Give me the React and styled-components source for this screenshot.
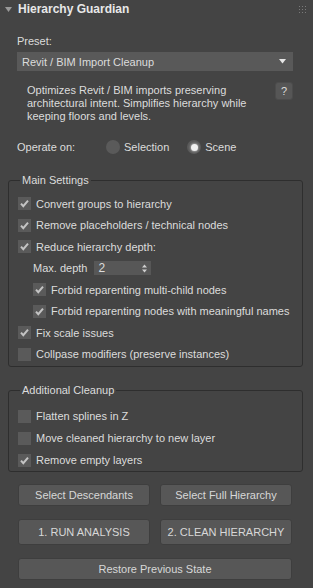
import styled, { createGlobalStyle } from "styled-components";

const GlobalStyle = createGlobalStyle`
  html, body {
    margin: 0;
    padding: 0;
    background: #444444;
  }
  body {
    font-family: "Liberation Sans", Arial, sans-serif;
    font-size: 11px;
    color: #dcdcdc;
  }
`;

const Panel = styled.div`
  width: 313px;
  height: 588px;
  background: #444444;
  overflow: hidden;
  white-space: nowrap;
`;

const Header = styled.div`
  height: 18px;
  display: flex;
  align-items: center;
  padding: 0 7px 0 5px;
`;

const Title = styled.div`
  flex: 1;
  margin-left: 6px;
  font-weight: bold;
  font-size: 12px;
  color: #e8e8e8;
`;

const Grip = styled.div`
  display: grid;
  grid-template-columns: repeat(3, 1px);
  gap: 2px;
  span {
    width: 1px;
    height: 1px;
    background: #7a7a7a;
  }
`;

const Body = styled.div`
  padding: 0 10px 0 17px;
`;

const Label = styled.div`
  line-height: 14px;
  margin-top: ${(p) => p.$top || 0}px;
`;

const Dropdown = styled.div`
  margin-top: 4px;
  height: 19px;
  width: 276px;
  box-sizing: border-box;
  background: #595959;
  display: flex;
  align-items: center;
  justify-content: space-between;
  padding: 0 7px 0 5px;
`;

const InfoRow = styled.div`
  display: flex;
  align-items: flex-start;
  justify-content: space-between;
  width: 276px;
  margin-top: 11px;
`;

const Description = styled.div`
  padding-left: 10px;
  padding-top: 2px;
  line-height: 13px;
`;

const HelpButton = styled.div`
  width: 18px;
  height: 18px;
  box-sizing: border-box;
  border-radius: 3px;
  background: #565656;
  border: 1px solid #4c4c4c;
  display: flex;
  align-items: center;
  justify-content: center;
`;

const OperateRow = styled.div`
  display: flex;
  align-items: center;
  height: 20px;
  margin-top: 14px;
`;

const OperateLabel = styled.div`
  width: 89px;
`;

const RadioItem = styled.div`
  display: flex;
  align-items: center;
  gap: 4px;
  margin-right: ${(p) => p.$gap || 0}px;
`;

const RadioDot = styled.div`
  width: 14px;
  height: 14px;
  border-radius: 50%;
  background: #5a5a5a;
  display: flex;
  align-items: center;
  justify-content: center;
  &::after {
    content: "";
    display: ${(p) => (p.$on ? "block" : "none")};
    width: 7px;
    height: 7px;
    border-radius: 50%;
    background: #f0f0f0;
    box-shadow: 0 0 2px 1px rgba(230, 230, 230, 0.45);
  }
`;

const Group = styled.fieldset`
  margin: ${(p) => p.$top}px 10px 0 8px;
  padding: ${(p) => p.$padTop}px 8px ${(p) => p.$bottom}px 9px;
  border: 1px solid #2e2e2e;
  border-radius: 3px;
  min-width: 0;
`;

const Legend = styled.legend`
  padding: 0 2px;
  margin-left: 2px;
  line-height: 14px;
  color: #dcdcdc;
`;

const Row = styled.div`
  height: ${(p) => p.$h || 21.5}px;
  display: flex;
  align-items: center;
  padding-left: ${(p) => (p.$indent ? 15 : 0)}px;
`;

const Box = styled.div`
  width: 13px;
  height: 13px;
  flex-shrink: 0;
  background: #5a5a5a;
  margin-right: 5px;
  display: flex;
  align-items: center;
  justify-content: center;
`;

const Spinner = styled.div`
  margin-left: 7px;
  width: 57px;
  height: 14px;
  box-sizing: border-box;
  background: #575757;
  display: flex;
  align-items: center;
  justify-content: space-between;
  padding: 0 4px 0 4px;
  font-size: 12px;
`;

const ButtonRow = styled.div`
  display: flex;
  gap: 10px;
  margin: ${(p) => p.$top || 13}px 21px 0 18px;
`;

const Button = styled.div`
  flex: 1;
  height: ${(p) => p.$h || 22}px;
  box-sizing: border-box;
  background: #575757;
  border: 1px solid #3e3e3e;
  border-radius: 3px;
  display: flex;
  align-items: center;
  justify-content: center;
  color: #d8d8d8;
`;

const Check = ({ on }) => (
  <Box>
    {on && (
      <svg width="11" height="11" viewBox="0 0 11 11">
        <path d="M2 5.6 L4.3 8.2 L9 2.6" fill="none" stroke="#c4c4c4" strokeWidth="2" />
      </svg>
    )}
  </Box>
);

const CheckRow = ({ on, indent, children, h }) => (
  <Row $indent={indent} $h={h}>
    <Check on={on} />
    <span>{children}</span>
  </Row>
);

const App = () => {
  return (
    <Panel>
      <GlobalStyle />
      <Header>
        <svg width="7" height="5" viewBox="0 0 7 5">
          <path d="M0 0 H7 L3.5 5 Z" fill="#9a9a9a" />
        </svg>
        <Title>Hierarchy Guardian</Title>
        <Grip>
          {Array.from({ length: 9 }).map((_, i) => (
            <span key={i} />
          ))}
        </Grip>
      </Header>

      <Body>
        <Label $top={16}>Preset:</Label>
        <Dropdown>
          <span>Revit / BIM Import Cleanup</span>
          <svg width="7" height="5" viewBox="0 0 7 5">
            <path d="M0 0 H7 L3.5 4.5 Z" fill="#e6e6e6" />
          </svg>
        </Dropdown>

        <InfoRow>
          <Description>
            Optimizes Revit / BIM imports preserving
            <br />
            architectural intent. Simplifies hierarchy while
            <br />
            keeping floors and levels.
          </Description>
          <HelpButton>?</HelpButton>
        </InfoRow>

        <OperateRow>
          <OperateLabel>Operate on:</OperateLabel>
          <RadioItem $gap={18}>
            <RadioDot />
            <span>Selection</span>
          </RadioItem>
          <RadioItem>
            <RadioDot $on />
            <span>Scene</span>
          </RadioItem>
        </OperateRow>
      </Body>

      <Group $top={16} $padTop={6} $bottom={1}>
        <Legend>Main Settings</Legend>
        <CheckRow on>Convert groups to hierarchy</CheckRow>
        <CheckRow on>Remove placeholders / technical nodes</CheckRow>
        <CheckRow on>Reduce hierarchy depth:</CheckRow>
        <Row $indent>
          <span>Max. depth</span>
          <Spinner>
            <span>2</span>
            <svg width="5" height="9" viewBox="0 0 5 9">
              <path d="M0 3.5 L2.5 0.5 L5 3.5 Z M0 5.5 L2.5 8.5 L5 5.5 Z" fill="#cfcfcf" />
            </svg>
          </Spinner>
        </Row>
        <CheckRow on indent>Forbid reparenting multi-child nodes</CheckRow>
        <CheckRow on indent>Forbid reparenting nodes with meaningful names</CheckRow>
        <CheckRow on>Fix scale issues</CheckRow>
        <CheckRow>Collpase modifiers (preserve instances)</CheckRow>
      </Group>

      <Group $top={16} $padTop={8} $bottom={0}>
        <Legend>Additional Cleanup</Legend>
        <CheckRow h={22}>Flatten splines in Z</CheckRow>
        <CheckRow h={22}>Move cleaned hierarchy to new layer</CheckRow>
        <CheckRow on h={22}>Remove empty layers</CheckRow>
      </Group>

      <ButtonRow $top={12}>
        <Button>Select Descendants</Button>
        <Button>Select Full Hierarchy</Button>
      </ButtonRow>
      <ButtonRow>
        <Button $h={26}>1. RUN ANALYSIS</Button>
        <Button $h={26}>2. CLEAN HIERARCHY</Button>
      </ButtonRow>
      <ButtonRow>
        <Button>Restore Previous State</Button>
      </ButtonRow>
    </Panel>
  );
};

export default App;
